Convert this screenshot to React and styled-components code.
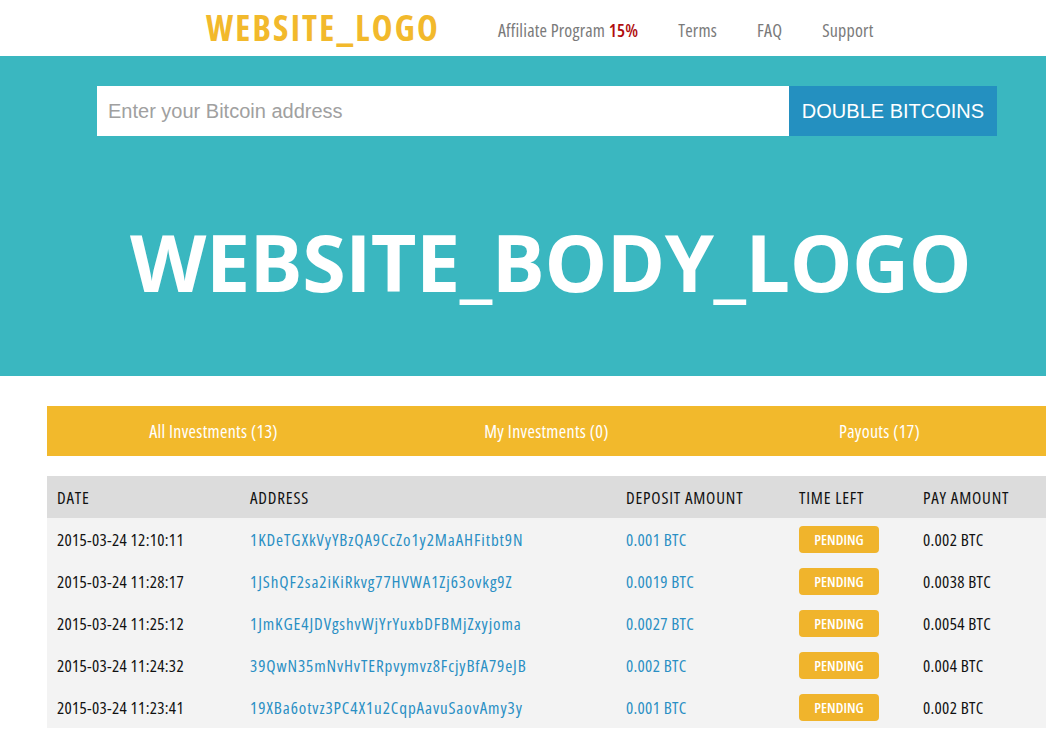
import React from 'react';
import styled, { createGlobalStyle } from 'styled-components';

const GlobalStyle = createGlobalStyle`
    body {
        margin: 0;
        background: #fff;
        font-family: "Open Sans", "Liberation Sans", sans-serif;
        overflow: hidden;
    }
`;

const investments = [
    { date: '2015-03-24 12:10:11', address: '1KDeTGXkVyYBzQA9CcZo1y2MaAHFitbt9N', deposit: '0.001 BTC', pay: '0.002 BTC' },
    { date: '2015-03-24 11:28:17', address: '1JShQF2sa2iKiRkvg77HVWA1Zj63ovkg9Z', deposit: '0.0019 BTC', pay: '0.0038 BTC' },
    { date: '2015-03-24 11:25:12', address: '1JmKGE4JDVgshvWjYrYuxbDFBMjZxyjoma', deposit: '0.0027 BTC', pay: '0.0054 BTC' },
    { date: '2015-03-24 11:24:32', address: '39QwN35mNvHvTERpvymvz8FcjyBfA79eJB', deposit: '0.002 BTC', pay: '0.004 BTC' },
    { date: '2015-03-24 11:23:41', address: '19XBa6otvz3PC4X1u2CqpAavuSaovAmy3y', deposit: '0.001 BTC', pay: '0.002 BTC' },
];

function App() {
    return (
        <>
            <GlobalStyle />
            <Header>
                <Logo>WEBSITE_LOGO</Logo>
                <Nav>
                    <NavLink>Affiliate Program <Percent>15%</Percent></NavLink>
                    <NavLink>Terms</NavLink>
                    <NavLink>FAQ</NavLink>
                    <NavLink>Support</NavLink>
                </Nav>
            </Header>

            <Hero>
                <AddressForm>
                    <AddressInput placeholder="Enter your Bitcoin address" />
                    <SubmitButton>DOUBLE BITCOINS</SubmitButton>
                </AddressForm>
                <BodyLogo>WEBSITE_BODY_LOGO</BodyLogo>
            </Hero>

            <Content>
                <Tabs>
                    <Tab>All Investments (13)</Tab>
                    <Tab>My Investments (0)</Tab>
                    <Tab>Payouts (17)</Tab>
                </Tabs>

                <Table>
                    <HeadRow>
                        <span>DATE</span>
                        <span>ADDRESS</span>
                        <span>DEPOSIT AMOUNT</span>
                        <span>TIME LEFT</span>
                        <span>PAY AMOUNT</span>
                    </HeadRow>
                    {investments.map(item => (
                        <Row key={item.date}>
                            <span>{item.date}</span>
                            <Address>{item.address}</Address>
                            <Link>{item.deposit}</Link>
                            <span><Badge>PENDING</Badge></span>
                            <span>{item.pay}</span>
                        </Row>
                    ))}
                </Table>
            </Content>
        </>
    );
}

export default App;

const Header = styled.div`
    height: 56px;
    display: flex;
    align-items: center;
    padding-left: 206px;
    box-sizing: border-box;
`;

const Logo = styled.div`
    font-family: "Open Sans", sans-serif;
    font-stretch: 75%;
    font-weight: 700;
    font-size: 35px;
    letter-spacing: 2.2px;
    color: #f2b92c;
    margin-top: -2px;
`;

const Nav = styled.div`
    display: flex;
    gap: 40px;
    margin: 3px 0 0 58px;
`;

const NavLink = styled.a`
    font-family: "Open Sans", sans-serif;
    font-stretch: 75%;
    font-size: 18px;
    letter-spacing: 0.2px;
    color: #7a7a7a;
    cursor: pointer;
`;

const Percent = styled.span`
    color: #b00d0d;
    font-weight: 600;
`;

const Hero = styled.div`
    background: #3ab7c0;
    height: 320px;
    padding-top: 30px;
    box-sizing: border-box;
`;

const AddressForm = styled.div`
    display: flex;
    margin-left: 97px;
    width: 900px;
    height: 50px;
`;

const AddressInput = styled.input`
    flex: 1;
    border: none;
    outline: none;
    padding: 0 11px;
    font-family: "Liberation Sans", Arial, sans-serif;
    font-size: 20px;
    color: #333;
    &::placeholder {
        color: #a0a0a0;
    }
`;

const SubmitButton = styled.button`
    width: 208px;
    border: none;
    background: #2490c0;
    color: #fff;
    font-family: "Liberation Sans", Arial, sans-serif;
    font-size: 20px;
    cursor: pointer;
`;

const BodyLogo = styled.h1`
    margin: 76px 0 0 130px;
    font-family: "Open Sans", sans-serif;
    font-weight: 700;
    font-size: 79px;
    line-height: 100px;
    color: #fff;
    letter-spacing: -0.5px;
`;

const Content = styled.div`
    margin: 30px 0 0 47px;
`;

const Tabs = styled.div`
    display: grid;
    grid-template-columns: repeat(3, 333px);
    height: 50px;
    background: #f2b92c;
`;

const Tab = styled.div`
    display: flex;
    align-items: center;
    justify-content: center;
    color: #fff;
    font-family: "Open Sans", sans-serif;
    font-stretch: 75%;
    font-size: 18px;
    letter-spacing: 0.3px;
    cursor: pointer;
`;

const Table = styled.div`
    margin-top: 20px;
`;

const Row = styled.div`
    display: grid;
    grid-template-columns: 193px 376px 173px 124px 1fr;
    align-items: center;
    height: 42px;
    padding-left: 10px;
    background: #f3f3f3;
    font-family: "Open Sans", sans-serif;
    font-stretch: 75%;
    font-size: 17px;
    letter-spacing: 0.3px;
    color: #111;
`;

const HeadRow = styled(Row)`
    background: #dcdcdc;
    letter-spacing: 0.8px;
`;

const Link = styled.span`
    color: #2a8fc4;
`;

const Address = styled(Link)`
    letter-spacing: 0.9px;
`;

const Badge = styled.span`
    display: inline-flex;
    align-items: center;
    justify-content: center;
    width: 80px;
    height: 27px;
    border-radius: 4px;
    background: #f0b42c;
    color: #fff;
    font-size: 14.5px;
    font-weight: 600;
    letter-spacing: 0;
`;
